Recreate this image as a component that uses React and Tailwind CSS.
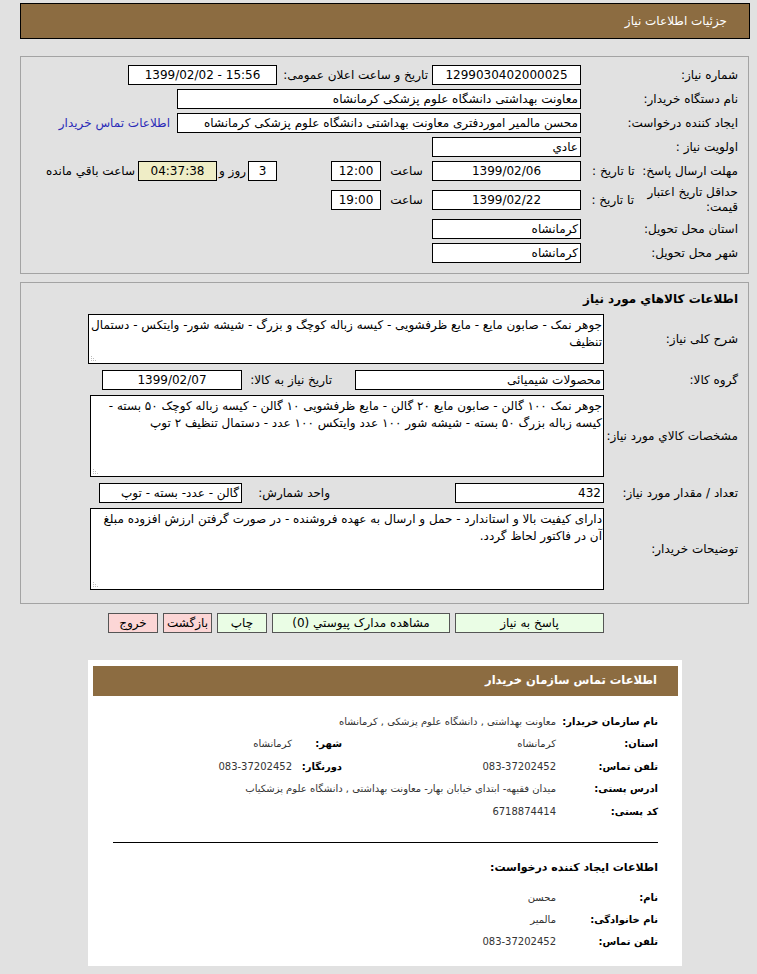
import React from 'react';

// Need details page (RTL form) + buyer contact card.
const BROWN = 'bg-[#8c6c41]';

function Box({ className = '', bg = 'bg-white', center, ltr, children }) {
  return (
    <div
      className={`h-[20px] shrink-0 overflow-hidden whitespace-nowrap border border-black px-[2px] leading-[18px] ${bg} ${
        center ? 'text-center' : 'text-right'
      } ${className}`}
    >
      {ltr ? <span dir="ltr">{children}</span> : children}
    </div>
  );
}

function Row({ label, className = 'h-[24px]', children }) {
  return (
    <div className={`flex items-center ${className}`}>
      <div className="w-[157px] shrink-0">{label}</div>
      {children}
    </div>
  );
}

function ItemRow({ label, className = '', children }) {
  return (
    <div className={`flex items-center ${className}`}>
      <div className="w-[134px] shrink-0">{label}</div>
      {children}
    </div>
  );
}

// textarea with the rtl resize grip drawn bottom-left
function Area({ className = '', value }) {
  return (
    <div className={`relative shrink-0 ${className}`}>
      <textarea
        readOnly
        dir="rtl"
        defaultValue={value}
        className="block h-full w-full resize-none overflow-hidden border border-black bg-white px-[1px] pt-[2px] text-[12px] leading-[17px] text-black outline-none"
      />
      <svg className="absolute bottom-[2px] left-[2px]" width="9" height="9" viewBox="0 0 9 9">
        <g fill="#bdbdbd">
          <rect x="1" y="7" width="1" height="1" />
          <rect x="3" y="7" width="1" height="1" />
          <rect x="5" y="7" width="1" height="1" />
          <rect x="1" y="5" width="1" height="1" />
          <rect x="3" y="5" width="1" height="1" />
          <rect x="1" y="3" width="1" height="1" />
        </g>
      </svg>
    </div>
  );
}

function Btn({ className, children }) {
  return (
    <div className={`flex h-[20px] shrink-0 items-center justify-center border border-[#555] leading-none ${className}`}>
      {children}
    </div>
  );
}

function CardRow({ label, value, label2, value2, className = 'h-[22.5px]' }) {
  return (
    <div className={`flex items-center ${className}`}>
      <div className="w-[102px] shrink-0 whitespace-nowrap text-[10px] font-bold">{label}</div>
      <div className={`${label2 ? 'w-[214px]' : ''} shrink-0 whitespace-nowrap text-[10px] text-[#333]`}>{value}</div>
      {label2 && <div className="w-[50px] shrink-0 whitespace-nowrap text-[10px] font-bold">{label2}</div>}
      {label2 && <div className="whitespace-nowrap text-[10px] text-[#333]">{value2}</div>}
    </div>
  );
}

export default function App() {
  return (
    <div dir="rtl" className="min-h-screen bg-[#e1e1e1] pt-[3px] font-['DejaVu_Sans',sans-serif] text-[12px] text-black">
      <div className="ml-[20px] mr-[7px]">
        <div className={`flex h-[36px] items-center border border-black ${BROWN} pr-[22px] text-white`}>
          جزئیات اطلاعات نیاز
        </div>
      </div>

      <div className="ml-[20px] mr-[8px]">
        {/* general info */}
        <section className="mt-[17px] border border-[#a3a3a3] pb-[8px] pr-[10px] pt-[6px]">
          <Row label="شماره نیاز:">
            <Box className="w-[149px]" center>1299030402000025</Box>
            <span className="w-[155px] shrink-0 pr-[4px] whitespace-nowrap">تاریخ و ساعت اعلان عمومی:</span>
            <Box className="w-[149px]" center ltr>1399/02/02 - 15:56</Box>
          </Row>
          <Row label="نام دستگاه خریدار:">
            <Box className="w-[404px]">معاونت بهداشتی دانشگاه علوم پزشکی کرمانشاه</Box>
          </Row>
          <Row label="ایجاد کننده درخواست:">
            <Box className="w-[404px]">محسن مالمیر اموردفتری معاونت بهداشتی دانشگاه علوم پزشکی کرمانشاه</Box>
            <a className="mr-[7px] whitespace-nowrap text-[#2b2bb8]">اطلاعات تماس خریدار</a>
          </Row>
          <Row label="اولویت نیاز :">
            <Box className="w-[149px]">عادي</Box>
          </Row>
          <Row label={<span className="whitespace-nowrap">مهلت ارسال پاسخ:&nbsp; تا تاریخ :</span>}>
            <Box className="w-[149px]" center>1399/02/06</Box>
            <span className="w-[51px] shrink-0 text-center">ساعت</span>
            <Box className="w-[50px]" center>12:00</Box>
            <span className="w-[54px] shrink-0" />
            <Box className="w-[29px]" center>3</Box>
            <span className="w-[31px] shrink-0 text-center">روز و</span>
            <Box className="w-[79px]" bg="bg-[#efedc6]" center>04:37:38</Box>
            <span className="pr-[3px] whitespace-nowrap">ساعت باقي مانده</span>
          </Row>
          <Row
            className="h-[34px]"
            label={
              <div className="flex items-center">
                <div className="w-[104px] shrink-0 whitespace-nowrap leading-[15px]">
                  حداقل تاریخ اعتبار
                  <br />
                  قیمت:
                </div>
                <span className="whitespace-nowrap">تا تاریخ :</span>
              </div>
            }
          >
            <Box className="w-[149px]" center>1399/02/22</Box>
            <span className="w-[51px] shrink-0 text-center">ساعت</span>
            <Box className="w-[50px]" center>19:00</Box>
          </Row>
          <Row label="استان محل تحویل:">
            <Box className="w-[149px]">کرمانشاه</Box>
          </Row>
          <Row label="شهر محل تحویل:">
            <Box className="w-[149px]">کرمانشاه</Box>
          </Row>
        </section>

        {/* goods */}
        <section className="mt-[8px] border border-[#a3a3a3] pb-[13px] pr-[10px] pt-[8px]">
          <div className="mb-[7px] h-[16px] font-bold leading-[16px]">اطلاعات کالاهاي مورد نیاز</div>
          <ItemRow label="شرح کلی نیاز:">
            <Area
              className="h-[50px] w-[516px]"
              value="جوهر نمک - صابون مایع - مایع ظرفشویی - کیسه زباله کوچگ و بزرگ - شیشه شور- وایتکس - دستمال تنظیف"
            />
          </ItemRow>
          <ItemRow label="گروه کالا:" className="mt-[6px]">
            <Box className="w-[249px]">محصولات شیمیائی</Box>
            <span className="w-[113px] shrink-0 pr-[23px] whitespace-nowrap">تاریخ نیاز به کالا:</span>
            <Box className="w-[140px]" center>1399/02/07</Box>
          </ItemRow>
          <ItemRow label="مشخصات کالاي مورد نیاز:" className="mt-[5px]">
            <Area
              className="h-[82px] w-[514px]"
              value="جوهر نمک ۱۰۰ گالن - صابون مایع ۲۰ گالن - مایع ظرفشویی ۱۰ گالن - کیسه زباله کوچک ۵۰ بسته - کیسه زباله بزرگ ۵۰ بسته - شیشه شور ۱۰۰ عدد وایتکس ۱۰۰ عدد - دستمال تنظیف ۲ توپ"
            />
          </ItemRow>
          <ItemRow label="تعداد / مقدار مورد نیاز:" className="mt-[6px]">
            <Box className="w-[149px]">432</Box>
            <span className="w-[213px] shrink-0 pr-[125px] whitespace-nowrap">واحد شمارش:</span>
            <Box className="w-[143px]">گالن - عدد- بسته - توپ</Box>
          </ItemRow>
          <ItemRow label="توضیحات خریدار:" className="mt-[5px]">
            <Area
              className="h-[82px] w-[514px]"
              value="دارای کیفیت بالا و استاندارد - حمل و ارسال به عهده فروشنده - در صورت گرفتن ارزش افزوده مبلغ آن در فاکتور لحاظ گردد."
            />
          </ItemRow>
        </section>

        <div className="mt-[9px] flex gap-[5px] pr-[145px]">
          <Btn className="w-[149px] bg-[#eafde5]">پاسخ به نیاز</Btn>
          <Btn className="w-[178px] bg-[#eafde5]">مشاهده مدارک پیوستي (0)</Btn>
          <Btn className="w-[50px] bg-[#eafde5]">چاپ</Btn>
          <Btn className="w-[49px] bg-[#fcd6d6]">بازگشت</Btn>
          <Btn className="w-[50px] bg-[#fcd6d6]">خروج</Btn>
        </div>
      </div>

      {/* buyer contact card */}
      <div className="mr-[75px] mt-[27px] w-[594px] bg-white pb-[13px] pl-[5px] pr-[4px] pt-[6px]">
        <div className={`flex h-[30px] items-center ${BROWN} pr-[21px] text-[11.5px] font-bold text-white`}>
          اطلاعات تماس سازمان خریدار
        </div>
        <div className="mt-[14px] pr-[20px]">
          <CardRow label="نام سازمان خریدار:" value="معاونت بهداشتی , دانشگاه علوم پزشکی , کرمانشاه" />
          <CardRow label="استان:" value="کرمانشاه" label2="شهر:" value2="کرمانشاه" />
          <CardRow label="تلفن تماس:" value="083-37202452" label2="دورنگار:" value2="083-37202452" />
          <CardRow label="ادرس پستی:" value="میدان فقیهه- ابتدای خیابان بهار- معاونت بهداشتی , دانشگاه علوم پزشکیاب" />
          <CardRow label="کد پستی:" value="6718874414" />
        </div>
        <div className="mx-[20px] mt-[19px] h-px bg-black" />
        <div className="mr-[20px] mt-[17px] h-[16px] text-[11px] font-bold leading-[16px]">اطلاعات ایجاد کننده درخواست:</div>
        <div className="mt-[11px] pr-[20px]">
          <CardRow className="h-[22px]" label="نام:" value="محسن" />
          <CardRow className="h-[22px]" label="نام خانوادگی:" value="مالمیر" />
          <CardRow className="h-[22px]" label="تلفن تماس:" value="083-37202452" />
        </div>
      </div>
    </div>
  );
}
